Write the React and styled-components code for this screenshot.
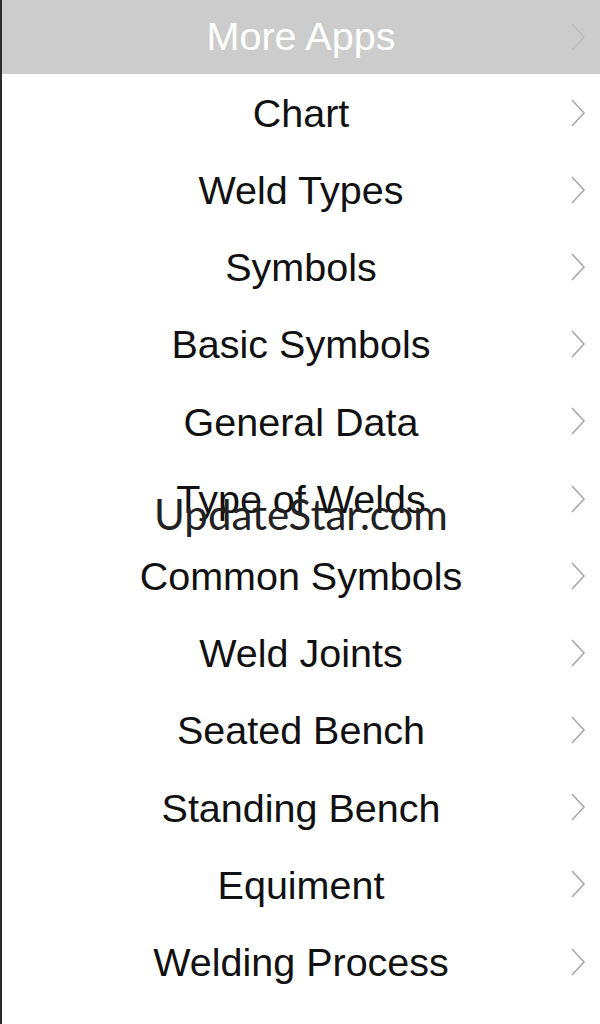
import React from 'react'
import styled, { createGlobalStyle } from 'styled-components';

const Global = createGlobalStyle`
  html, body {
    margin: 0;
    padding: 0;
    background: #ffffff;
  }
  body {
    font-family: "Liberation Sans", Arial, sans-serif;
  }
`;

const Screen = styled.div`
  position: relative;
  width: 600px;
  height: 1024px;
  overflow: hidden;
  box-sizing: border-box;
  border-left: 2px solid #2b2b2b;
  background: #ffffff;
`;

const Row = styled.div`
  height: ${(p) => (p.$header ? '74px' : '77.2px')};
  background: ${(p) => (p.$header ? '#cccccc' : '#ffffff')};
  color: ${(p) => (p.$header ? '#ffffff' : '#111111')};
  display: grid;
  grid-template-columns: 1fr auto 1fr;
  align-items: center;
  font-size: 39.5px;
`;

const Label = styled.span`
  grid-column: 2;
  line-height: 1;
  white-space: nowrap;
  padding-top: ${(p) => (p.$header ? '0' : '2px')};
`;

const Chevron = styled.svg`
  grid-column: 3;
  justify-self: end;
  margin-right: 14px;
  width: 16px;
  height: 28px;
`;

const Watermark = styled.div`
  position: absolute;
  left: 0;
  right: 0;
  top: 490px;
  text-align: center;
  font-family: Lato, "Open Sans", sans-serif;
  font-size: 42px;
  line-height: 48px;
  color: #222222;
  pointer-events: none;
`;

function Arrow({ color }) {
  return (
    <Chevron viewBox="0 0 16 28">
      <polyline points="2,1 14,14 2,27" fill="none" stroke={color} strokeWidth="1.6" />
    </Chevron>
  );
}

const items = [
  'Chart',
  'Weld Types',
  'Symbols',
  'Basic Symbols',
  'General Data',
  'Type of Welds',
  'Common Symbols',
  'Weld Joints',
  'Seated Bench',
  'Standing Bench',
  'Equiment',
  'Welding Process',
  'Welding Tools',
];

function App() {
  return (
    <>
      <Global />
      <Screen>
        <Row $header>
          <Label $header>More Apps</Label>
          <Arrow color="#bdbdbd" />
        </Row>
        {items.map((item) => (
          <Row key={item}>
            <Label>{item}</Label>
            <Arrow color="#a8a8a8" />
          </Row>
        ))}
        <Watermark>UpdateStar.com</Watermark>
      </Screen>
    </>
  )
}

export default App;
